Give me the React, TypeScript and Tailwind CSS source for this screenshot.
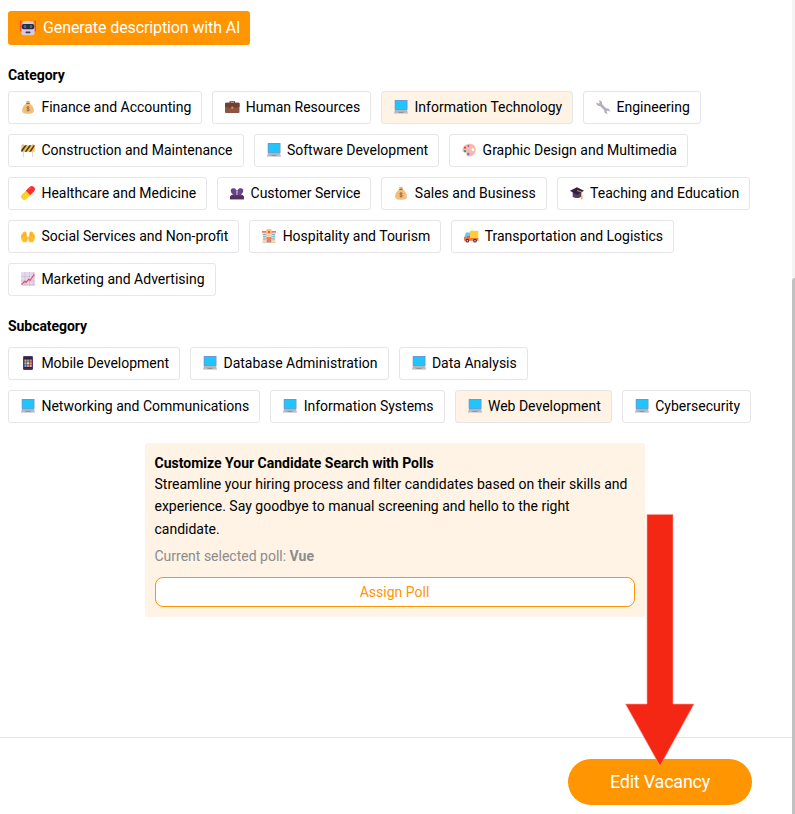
import React from "react";

type IconName =
  | "money" | "briefcase" | "laptop" | "wrench" | "barrier" | "palette" | "pill"
  | "people" | "cap" | "hands" | "hotel" | "truck" | "chart" | "phone";

const shapes: Record<IconName, React.ReactNode> = {
  money: (
    <>
      <path d="M5.2.8 6.300 1.200 7 .6l.7.6 1.100-.4-.6 2.400H5.800z" fill="#e8ae60" />
      <path d="M5.400 3.600h3.200C11 5.200 12.900 7.800 12.900 10.400c0 2.400-1.800 3.300-5.900 3.300S1.100 12.800 1.100 10.400C1.100 7.800 3 5.200 5.400 3.600z" fill="#f3be78" />
      <path d="M5.200 2.900h3.600v1H5.200z" fill="#8f5f4c" />
      <path d="M8.500 7.500C8.100 6.800 5.700 6.700 5.700 7.800c0 1.200 2.800.8 2.800 2 0 1.200-2.700 1.100-3 .2M7 6.200v5.200" fill="none" stroke="#8f5f4c" strokeWidth=".8" />
    </>
  ),
  briefcase: (
    <>
      <path d="M5 3V1.800h4.500V3" fill="none" stroke="#5b3a36" strokeWidth="1.100" />
      <rect x="0" y="2.800" width="14.500" height="10.200" rx="1" fill="#8b5546" />
      <path d="M0 3.600Q0 2.800 1 2.800h12.500q1 0 1 .8v3.200L8.500 8H6L0 6.800z" fill="#6b4037" />
      <rect x="6.200" y="6.500" width="2.200" height="2.200" rx=".4" fill="#f08a24" />
    </>
  ),
  laptop: (
    <>
      <rect x=".7" y="0" width="12.800" height="10" rx=".4" fill="#7b8fd0" />
      <rect x="1.500" y=".8" width="11.200" height="8.700" fill="#20c5fb" />
      <path d="M1 10h12l1 3.500H0z" fill="#bdbcc1" />
      <path d="M.8 11h12.400" stroke="#a5a4aa" strokeWidth=".6" />
      <rect x="4.500" y="11.900" width="5" height="1" fill="#8f8d96" />
      <path d="M0 13.400h14v.6H0z" fill="#d3d2d6" />
    </>
  ),
  wrench: (
    <path d="M.5 2.300 2.600 3.700 3.900 2.500 2.700.5C4.800 0 6.500 1.800 6 4.100l4.200 4.300c2-.5 4.100 1 3.500 3.400l-2-1.300-1.300 1.100 1.300 2.100c-2.300.4-3.900-1.300-3.400-3.400L4 6C2 6.500 0 4.700.5 2.300z" fill="#b4aebb" />
  ),
  barrier: (
    <>
      <path d="M2.400 8v6M11.600 8v6" stroke="#d3cfd8" strokeWidth=".9" />
      <rect x=".3" y="2.300" width="13.400" height="6.500" rx=".6" fill="#fbc83d" />
      <path d="M.3 6.800 4 2.300h2L1.200 8.800H.3zM3.600 8.800 8.300 2.300h2L5.600 8.800zM8 8.800l4.500-6.500h1.200v.8L10 8.800z" fill="#4a3543" />
      <path d="M2 2.500v-.9M12 2.500v-.9" stroke="#ed714a" strokeWidth="1.200" />
    </>
  ),
  palette: (
    <>
      <path d="M6.200 1C10.500-.2 14 3 13.700 7c-.3 3.800-3.100 6.600-6.800 6.400-2-.1-3-1.200-2.500-2.400.3-1-.2-1.500-1.600-1.400C1.400 9.700.3 8.700.4 6.600.6 3.800 2.900 1.700 6.200 1z" fill="#f8b9ac" />
      <ellipse cx="10.900" cy="6.600" rx="1.400" ry="1.700" fill="#fff" />
      <circle cx="3" cy="4.700" r="1.100" fill="#f92f60" />
      <circle cx="6.300" cy="2.900" r="1" fill="#a556c6" />
      <circle cx="3" cy="8.100" r="1.200" fill="#00b875" />
      <circle cx="6.300" cy="11" r="1.200" fill="#5079ee" />
    </>
  ),
  pill: (
    <>
      <path d="M4.800 4.800 9.200 9.200 5.500 12.900A3.100 3.100 0 0 1 1.100 8.500z" fill="#fcd12a" />
      <path d="M4.800 4.800 8.500 1.100A3.100 3.100 0 0 1 12.900 5.500L9.200 9.200z" fill="#f8312f" />
      <path d="M8.400 2.800 10 1.500" stroke="#ff6a63" strokeWidth=".7" strokeLinecap="round" />
    </>
  ),
  people: (
    <>
      <path d="M0 13.200v-1.700c0-1.600 1.300-2.300 2.600-2.600V8C1.200 7.300.7 5.500.8 4 1 1.700 5.700 1.500 6.200 4h1.600c.5-2.500 5.200-2.300 5.400 0 .1 1.500-.4 3.300-1.800 4v.9c1.300.3 2.600 1 2.600 2.600v1.700z" fill="#6b438b" />
      <path d="M0 13.200v-1.700c0-1.400.8-2.200 2-2.600l2 .8L6 9l1 1.200L8 9l2 .7 2-.8c1.200.4 2 1.200 2 2.600v1.700z" fill="#513060" />
      <path d="M6.500 4.500h1L7.300 9h-.6z" fill="#fff" />
    </>
  ),
  cap: (
    <>
      <path d="M2.700 6h8.500v4.800c-2.200 1.700-6 1.700-8.500 0z" fill="#5a3d66" />
      <path d="M7 1.200 14 4.800 7 9 0 4.800z" fill="#34203f" />
      <path d="M7 4.500 11.700 6v3.300" fill="none" stroke="#f2a31f" strokeWidth=".9" />
      <path d="m11.300 8.700 1 .2.300 4.400-1.900.2z" fill="#fbb32c" />
    </>
  ),
  hands: (
    <>
      <path d="M2.200 13.200C.2 11.500-.4 8.300.2 5.700q.6-.9 1 0L1.600 3.500q.5-.9 1.100 0l.7-1q.7-.5 1 .5.900-.5 1.100.5l.4 3.600q1.100.4 1 2l-.6 3-1 1.100z" fill="#ffbe2e" />
      <path d="M11.800 13.200c2-1.700 2.600-4.900 2-7.500q-.6-.9-1 0l-.4-2.200q-.5-.9-1.100 0l-.7-1q-.7-.5-1 .5-.900-.5-1.100.5l-.4 3.600q-1.100.4-1 2l.6 3 1 1.100z" fill="#ffbe2e" />
      <path d="M1.300 5.700 2 8M2.800 4 3.300 7.300M4.400 3.500v3.700M12.700 5.700 12 8M11.200 4l-.5 3.300M9.600 3.500v3.700M4.200 11.500 5.700 8.300M9.800 11.500 8.300 8.300" stroke="#eb9a20" strokeWidth=".5" />
    </>
  ),
  hotel: (
    <>
      <path d="M.7 3.500h4v10h-4zM9.300 3.500h4v10h-4z" fill="#f4d7ad" />
      <path d="M0 2.300h5v1.200H0zM9 2.300h5v1.200H9z" fill="#f5433e" />
      <path d="M4.200 2.500 5 .4h4l.8 2.100v11H4.200z" fill="#ffb98f" />
      <path d="M4.200 1.400 5 .2h4l.8 1.200z" fill="#ffc23c" />
      <path d="M1.200 5h2.500v1H1.200zM10.300 5h2.500v1h-2.500zM1.200 7.300h2.500v1H1.200zM10.300 7.300h2.500v1h-2.500zM1.200 9.600h2.500v1H1.200zM10.300 9.600h2.500v1h-2.500z" fill="#4fb6e8" />
      <circle cx="7" cy="3" r="1.100" fill="#f5433e" />
      <path d="M5 5.500h4M5 7.300h4" stroke="#ffe4c2" />
      <path d="M4 9.400 5 8.400h4l1 1z" fill="#f5433e" />
      <path d="M5.200 10.300h3.600v3.200H5.200z" fill="#e9544d" />
      <path d="M6.200 10.600h1.600v2.900H6.200z" fill="#64bfe8" />
      <path d="M.3 13.100h13.400v.6H.3z" fill="#d9bea0" />
    </>
  ),
  truck: (
    <>
      <path d="M.5 7.500 2 3.600h4v7H.2V8.500z" fill="#69c8ee" />
      <rect x="6" y="1.800" width="8.300" height="7.200" rx=".4" fill="#fccf3a" />
      <path d="M0 8h6v1h8.400v2.700H0z" fill="#fb7137" />
      <path d="M3 7.200h3v1H3z" fill="#f8502f" />
      <circle cx="3.400" cy="11.700" r="1.900" fill="#45304e" />
      <circle cx="11" cy="11.700" r="1.900" fill="#45304e" />
      <circle cx="3.400" cy="11.700" r=".8" fill="#ded8e2" />
      <circle cx="11" cy="11.700" r=".8" fill="#ded8e2" />
    </>
  ),
  chart: (
    <>
      <rect width="14" height="14" rx="1" fill="#e4daec" />
      <path d="M4 0v14M8.500 0v14M12.300 0v14M0 4.500h14M0 9h14M0 12.500h14" stroke="#c5b8d1" strokeWidth=".6" />
      <path d="m.7 12.300 3-3 1.300 1.200 2.600-3.200 1.600 1L13.300 2.200" fill="none" stroke="#f8395f" strokeWidth="1.100" />
    </>
  ),
  phone: (
    <>
      <rect x="2" y="0" width="10" height="14" rx="1.300" fill="#50366f" />
      <rect x="3" y="1.300" width="8" height="11.200" fill="#30213f" />
      <path d="M3.400 3.600h2.200v2.200H3.400zM8.600 6.200h2.200v2.200H8.600z" fill="#f5a442" />
      <path d="M6 3.600h2.200v2.200H6zM3.400 8.800h2.200V11H3.400z" fill="#48b5ee" />
      <path d="M8.600 3.600h2.200v2.200H8.600zM6 8.800h2.200V11H6z" fill="#f08a50" />
      <path d="M3.400 6.200h2.200v2.200H3.400zM8.600 8.800h2.200V11H8.600z" fill="#d1a7eb" />
      <path d="M6 6.200h2.200v2.200H6z" fill="#ffda68" />
    </>
  ),
};

function Emoji({ name }: { name: IconName }) {
  return (
    <svg viewBox="0 0 14 14" className="h-3.5 w-3.5 shrink-0 overflow-visible">
      {shapes[name]}
    </svg>
  );
}

function Robot() {
  return (
    <svg viewBox="0 0 16 16" className="h-4 w-4 shrink-0 overflow-visible">
      <path d="M.8 7V1M15.200 7V1" stroke="#f8312f" strokeWidth=".9" />
      <circle cx=".8" cy="1.300" r=".8" fill="#f8312f" />
      <circle cx="15.200" cy="1.300" r=".8" fill="#f8312f" />
      <rect x=".2" y="6" width="2" height="5.500" rx=".8" fill="#e03a35" />
      <rect x="13.800" y="6" width="2" height="5.500" rx=".8" fill="#e03a35" />
      <path d="M3 1.600Q8 .2 13 1.600L14.600 7v6q0 2.300-2.300 2.300H3.700Q1.400 15.300 1.400 13V7z" fill="#d5cbe0" />
      <rect x="1.800" y="4" width="12.400" height="5.300" rx="1.800" fill="#302a3b" />
      <circle cx="5" cy="6.600" r="1.300" fill="#2498c4" />
      <circle cx="11" cy="6.600" r="1.300" fill="#2498c4" />
      <circle cx="5" cy="6.600" r=".5" fill="#302a3b" />
      <circle cx="11" cy="6.600" r=".5" fill="#302a3b" />
      <rect x="5.500" y="11.600" width="5" height="1.700" rx=".7" fill="#463852" />
    </svg>
  );
}

interface Item {
  icon: IconName;
  label: string;
  active?: boolean;
}

const categories: Item[][] = [
  [
    { icon: "money", label: "Finance and Accounting" },
    { icon: "briefcase", label: "Human Resources" },
    { icon: "laptop", label: "Information Technology", active: true },
    { icon: "wrench", label: "Engineering" },
  ],
  [
    { icon: "barrier", label: "Construction and Maintenance" },
    { icon: "laptop", label: "Software Development" },
    { icon: "palette", label: "Graphic Design and Multimedia" },
  ],
  [
    { icon: "pill", label: "Healthcare and Medicine" },
    { icon: "people", label: "Customer Service" },
    { icon: "money", label: "Sales and Business" },
    { icon: "cap", label: "Teaching and Education" },
  ],
  [
    { icon: "hands", label: "Social Services and Non-profit" },
    { icon: "hotel", label: "Hospitality and Tourism" },
    { icon: "truck", label: "Transportation and Logistics" },
  ],
  [{ icon: "chart", label: "Marketing and Advertising" }],
];

const subcategories: Item[][] = [
  [
    { icon: "phone", label: "Mobile Development" },
    { icon: "laptop", label: "Database Administration" },
    { icon: "laptop", label: "Data Analysis" },
  ],
  [
    { icon: "laptop", label: "Networking and Communications" },
    { icon: "laptop", label: "Information Systems" },
    { icon: "laptop", label: "Web Development", active: true },
    { icon: "laptop", label: "Cybersecurity" },
  ],
];

function Chips({ rows }: { rows: Item[][] }) {
  return (
    <div className="flex flex-col gap-2.5">
      {rows.map((row, i) => (
        <div key={i} className="flex gap-2.5">
          {row.map((item) => (
            <button
              key={item.label}
              className={`flex h-[33px] items-center gap-[6.4px] rounded-[3px] border border-[#e5e5ea] pr-2.5 pb-px pl-3 whitespace-nowrap ${item.active ? "bg-[#fef3e4]" : "bg-white"}`}
            >
              <Emoji name={item.icon} />
              <span>{item.label}</span>
            </button>
          ))}
        </div>
      ))}
    </div>
  );
}

export default function App() {
  return (
    <div className="relative flex h-[814px] w-[795px] overflow-hidden bg-white font-[Roboto,sans-serif] text-sm text-black">
      <div className="flex min-w-0 flex-1 flex-col">
        <main className="flex h-[738px] flex-col border-b border-[#e4e4e7] px-2 pt-[11px]">
          <button className="flex h-[34px] w-[242px] items-center gap-[7px] rounded-[3px] bg-[#ff9500] pl-3 text-base tracking-[-0.11px] whitespace-nowrap text-white">
            <Robot />
            <span>Generate description with AI</span>
          </button>
          <h2 className="mt-5 mb-1.5 leading-5 font-bold tracking-[-0.05px]">Category</h2>
          <Chips rows={categories} />
          <h2 className="mt-5 mb-[11px] leading-5 font-bold tracking-[-0.05px]">Subcategory</h2>
          <Chips rows={subcategories} />
          <section className="mt-5 ml-[137px] flex h-[174px] w-[500px] flex-col rounded-[3px] bg-[#fef3e4] px-2.5 pt-2.5">
            <div className="-ml-[0.5px]">
              <h3 className="leading-5 font-bold">Customize Your Candidate Search with Polls</h3>
              <p className="leading-[22.4px]">
                Streamline your hiring process and filter candidates based on their skills and
                <br />
                experience. Say goodbye to manual screening and hello to the right
                <br />
                candidate.
              </p>
              <p className="mt-1.5 leading-5 text-[#8c8c8c]">
                Current selected poll: <b>Vue</b>
              </p>
            </div>
            <button className="mt-[11px] h-[30px] shrink-0 rounded-lg border border-[#ff9500] bg-white pr-px text-[#ff9500]">
              Assign Poll
            </button>
          </section>
        </main>
        <footer className="flex flex-1 justify-end pt-[21px] pr-10">
          <button className="h-[46px] w-[184px] rounded-full bg-[#ff9500] text-lg tracking-[-0.22px] text-white">
            Edit Vacancy
          </button>
        </footer>
      </div>
      <div className="w-[3px] shrink-0 bg-[#f4f4f4] pt-[278px]">
        <div className="h-[536px] rounded-tl-[3px] bg-[#c1c1c1]" />
      </div>
      <svg viewBox="0 0 70 253" className="absolute top-[514px] left-[625px] h-[253px] w-[70px]">
        <path d="M22 .5h26v189.500h21L35 252 .5 190H22z" fill="#f42714" stroke="#f6a49b" strokeWidth=".6" />
      </svg>
    </div>
  );
}
